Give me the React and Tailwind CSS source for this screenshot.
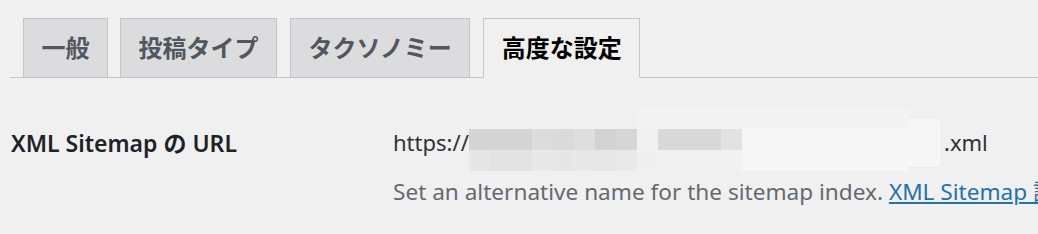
import React from 'react';

const tabs = [
  { label: '一般', active: false, ml: 'ml-[13px]' },
  { label: '投稿タイプ', active: false, ml: 'ml-[12px]' },
  { label: 'タクソノミー', active: false, ml: 'ml-[13px]' },
  { label: '高度な設定', active: true, ml: 'ml-[13px]' },
];

// pixelated (blurred) URL field, rows of 21px cells
const mosaicTop = [
  ['#f0f0f1', 8],
  ['#f3f3f3', 13],
];
const mosaicMid = [
  ['#d4d4d4', 3],
  ['#dcdcdc', 1],
  ['#dadada', 1],
  ['#dedede', 1],
  ['#d2d2d2', 1],
  ['#d6d6d6', 1],
  ['#f0f0f0', 1],
  ['#d8d8d8', 3],
  ['#e2e2e2', 1],
  ['#f6f6f6', 8],
];
const mosaicBottom = [
  ['#e6e6e6', 1],
  ['#e3e3e3', 2],
  ['#e8e8e8', 1],
  ['#e6e6e6', 1],
  ['#e8e8e8', 1],
  ['#e7e7e7', 1],
  ['#e9e9e9', 1],
  ['#efefef', 1],
  ['#f0f0f0', 3],
  ['#f1f1f1', 1],
  ['#f6f6f6', 8],
];

function MosaicRow({ cells }) {
  return (
    <div className="flex h-[21px]">
      {cells.map(([color, span], i) => (
        <div key={i} className="h-full shrink-0" style={{ backgroundColor: color, width: span * 21 }} />
      ))}
    </div>
  );
}

export default function App() {
  return (
    <div
      className="w-[1038px] h-[234px] bg-[#f0f0f1] overflow-hidden"
      style={{ fontFamily: '"Noto Sans", "Noto Sans CJK JP", sans-serif' }}
    >
      {/* Tabs */}
      <div className="ml-[10px] pt-[18px] flex items-end border-b border-[#c3c4c7]">
        {tabs.map((tab) => (
          <div
            key={tab.label}
            className={`h-[60px] mb-[-1px] px-[17.5px] flex items-center shrink-0 border border-[#c3c4c7] text-[24px] font-semibold leading-none ${tab.ml} ${
              tab.active
                ? 'bg-[#f0f0f1] border-b-[#f0f0f1] text-black'
                : 'bg-[#dcdcde] text-[#50575e]'
            }`}
          >
            {tab.label}
          </div>
        ))}
      </div>

      {/* Settings row */}
      <div className="flex pl-[11px] pt-[30px]">
        <div className="w-[382px] shrink-0 pt-[24px] text-[23px] font-semibold text-[#1d2327] leading-none">
          XML Sitemap の URL
        </div>
        <div className="flex flex-col shrink-0">
          <div className="flex items-center">
            <span className="w-[76px] text-[22px] text-[#2c3338] pt-[6px]">https://</span>
            <div className="relative w-[473px] h-[63px] shrink-0">
              <MosaicRow cells={mosaicTop} />
              <MosaicRow cells={mosaicMid} />
              <MosaicRow cells={mosaicBottom} />
              <div className="absolute right-0 top-[9px] w-[34px] h-[51px] bg-[#f6f6f6] rounded-r-[6px] border border-l-0 border-[#ececec]" />
            </div>
            <span className="ml-[2px] pt-[6px] text-[22px] text-[#2c3338]">.xml</span>
          </div>
          <div className="mt-[4px] text-[22.6px] leading-[34px] text-[#646970] whitespace-nowrap">
            Set an alternative name for the sitemap index.{' '}
            <a href="#" className="text-[#2271b1] underline">XML Sitemap 設定</a>
          </div>
        </div>
      </div>
    </div>
  );
}
